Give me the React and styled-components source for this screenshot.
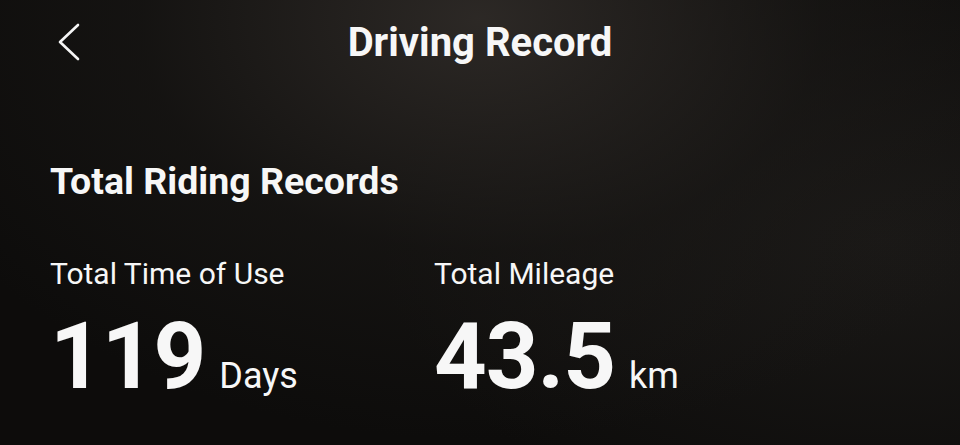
import React from "react";
import styled, { createGlobalStyle } from "styled-components";

const Global = createGlobalStyle`
  html, body {
    margin: 0;
    padding: 0;
    background: #0d0c0b;
  }
  body {
    font-family: Roboto, "Noto Sans", "Liberation Sans", sans-serif;
    color: #f7f7f7;
  }
`;

export default function App() {
  return (
    <>
      <Global />
      <Screen>
        <Header>
          <BackButton aria-label="Back">
            <svg width="24" height="38" viewBox="0 0 24 38" fill="none">
              <path d="M21 2 L3 19 L21 36" stroke="#f5f5f5" strokeWidth="2.6" strokeLinecap="round" strokeLinejoin="round" />
            </svg>
          </BackButton>
          <Title>Driving Record</Title>
          <span />
        </Header>

        <SectionTitle>Total Riding Records</SectionTitle>

        <Stats>
          <Stat>
            <Label>Total Time of Use</Label>
            <ValueRow>
              <Value>119</Value>
              <Unit>Days</Unit>
            </ValueRow>
          </Stat>
          <Stat>
            <Label>Total Mileage</Label>
            <ValueRow>
              <Value>43.5</Value>
              <Unit>km</Unit>
            </ValueRow>
          </Stat>
        </Stats>
      </Screen>
    </>
  );
}
// ::::::::::Styled-Components::::::::::
const Screen = styled.div`
  width: 960px;
  height: 445px;
  box-sizing: border-box;
  padding: 0 50px;
  overflow: hidden;
  background:
    radial-gradient(ellipse 620px 420px at 480px 20px, rgba(46, 42, 39, 0.95), rgba(28, 26, 24, 0.5) 55%, rgba(13, 12, 11, 0) 100%),
    radial-gradient(ellipse 500px 300px at 880px 240px, rgba(32, 30, 28, 0.7), rgba(13, 12, 11, 0) 100%),
    #0d0c0b;
`;

const Header = styled.div`
  display: grid;
  grid-template-columns: 60px 1fr 60px;
  align-items: center;
  height: 84px;
`;

const BackButton = styled.div`
  display: flex;
  align-items: center;
  padding-left: 7px;
`;

const Title = styled.h1`
  margin: 0;
  text-align: center;
  font-size: 40px;
  font-weight: 700;
`;

const SectionTitle = styled.h2`
  margin: 69px 0 0;
  font-size: 37.5px;
  font-weight: 700;
  line-height: 56px;
`;

const Stats = styled.div`
  display: grid;
  grid-template-columns: 384px 1fr;
  margin-top: 47px;
`;

const Stat = styled.div`
  display: flex;
  flex-direction: column;
`;

const Label = styled.div`
  font-size: 30px;
  line-height: 36px;
`;

const ValueRow = styled.div`
  display: flex;
  align-items: baseline;
  gap: 14px;
  margin-top: 15px;
`;

const Value = styled.span`
  font-size: 92px;
  font-weight: 700;
  line-height: 100px;
  letter-spacing: -1px;
`;

const Unit = styled.span`
  font-size: 36px;
`;
